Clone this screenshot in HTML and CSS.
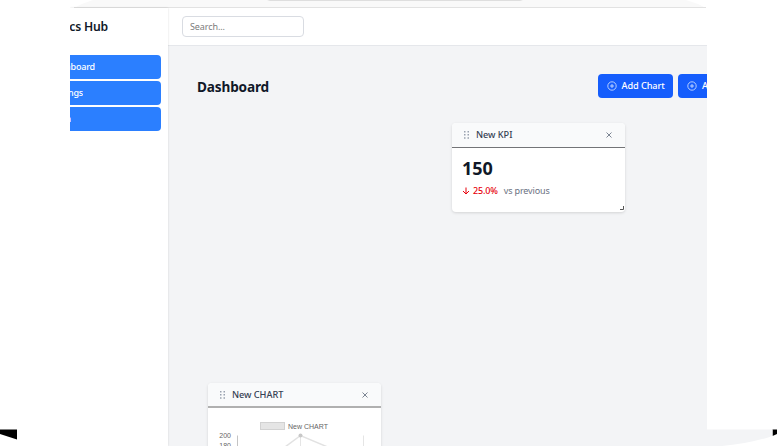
FILE: index.html
```html
<!DOCTYPE html>
<html lang="en">
<head>
<meta charset="utf-8">
<title>Analytics Hub</title>
<link rel="stylesheet" href="styles.css">
</head>
<body>
<svg class="backdrop" width="777" height="446" viewBox="0 0 777 446" aria-hidden="true">
  <path d="M0 429.5H17V439.5L0 434Z" fill="#000"/>
  <path d="M772.5 429.5H777V434L772.5 436Z" fill="#000"/>
  <path d="M706 429.5H772.5V436Q748 444 722 446H706Z" fill="#f3f4f6"/>
</svg>
<div class="window">
  <svg class="chrome" width="637" height="8" viewBox="0 0 637 8">
    <path d="M4 8Q13 3 23 0H616Q627 3 636 8Z" fill="#f9f9f9"/>
    <path d="M197 0H453L450 1H200Z" fill="#dedede"/>
    <path d="M4 7.5H636" stroke="#e2e2e2"/>
  </svg>
  <div class="app">
    <aside class="sidebar">
      <div class="brand"><span>Analytics Hub</span></div>
      <nav class="menu">
        <a class="item"><span class="dash">Dashboard</span></a>
        <a class="item"><span class="sett">Settings</span></a>
        <a class="item"><span class="auth">Login</span></a>
      </nav>
    </aside>
    <div class="content">
      <header class="topbar"><input class="search" type="text" placeholder="Search..."></header>
      <main class="main">
        <div class="heading">
          <h1>Dashboard</h1>
          <div class="actions">
            <button><svg width="10" height="10" viewBox="0 0 10 10"><circle cx="5" cy="5" r="4.2"/><path d="M5 3V7M3 5H7"/></svg><span>Add Chart</span></button>
            <button><svg width="10" height="10" viewBox="0 0 10 10"><circle cx="5" cy="5" r="4.2"/><path d="M5 3V7M3 5H7"/></svg><span>Add KPI</span></button>
          </div>
        </div>
        <div class="board">
          <section class="card kpi">
            <div class="card-head">
              <svg class="grip" width="5" height="8" viewBox="0 0 5 8"><path d="M0 0h1.5v1.5H0zM3.5 0H5v1.5H3.5zM0 3.1h1.5v1.5H0zM3.5 3.1H5v1.5H3.5zM0 6.2h1.5v1.5H0zM3.5 6.2H5v1.5H3.5z"/></svg>
              <h2>New KPI</h2>
              <svg class="close" width="6" height="6" viewBox="0 0 6 6"><path d="M.5.5l5 5M5.5.5l-5 5"/></svg>
            </div>
            <div class="kpi-body">
              <div class="value">150</div>
              <div class="trend">
                <svg width="8" height="8" viewBox="0 0 8 8"><path d="M4 .5V7M1 4L4 7L7 4"/></svg>
                <span class="change">25.0%</span><span class="note">vs previous</span>
              </div>
            </div>
            <svg class="resize" width="4" height="4" viewBox="0 0 4 4"><path d="M3.5 0V3.5H0"/></svg>
          </section>
          <section class="card chart">
            <div class="card-head">
              <svg class="grip" width="5" height="8" viewBox="0 0 5 8"><path d="M0 0h1.5v1.5H0zM3.5 0H5v1.5H3.5zM0 3.1h1.5v1.5H0zM3.5 3.1H5v1.5H3.5zM0 6.2h1.5v1.5H0zM3.5 6.2H5v1.5H3.5z"/></svg>
              <h2>New CHART</h2>
              <svg class="close" width="6" height="6" viewBox="0 0 6 6"><path d="M.5.5l5 5M5.5.5l-5 5"/></svg>
            </div>
            <svg class="plot" width="173" height="60" viewBox="0 0 173 60">
              <rect x="52.5" y="15.5" width="24" height="7" fill="#e5e5e5" stroke="#d2d2d2"/>
              <text x="80" y="21.5" textLength="40" lengthAdjust="spacingAndGlyphs">New CHART</text>
              <text x="23" y="31" text-anchor="end">200</text>
              <text x="23" y="41" text-anchor="end">180</text>
              <path d="M29.5 28.5V60" stroke="#c4c4c4"/>
              <path d="M92.5 28.5V60M155.5 28.5V60" stroke="#e5e5e5"/>
              <path d="M50 60L92.5 28.5L155 55" fill="none" stroke="#e2e2e2" stroke-width="1.5"/>
              <circle cx="92.5" cy="28.5" r="2" fill="#c8c8c8"/>
            </svg>
          </section>
        </div>
      </main>
    </div>
  </div>
</div>
</body>
</html>
```
FILE: styles.css
```css
* { box-sizing: border-box; }
body {
  margin: 0;
  height: 446px;
  overflow: hidden;
  background: #fff;
  font-family: "Noto Sans", sans-serif;
  color: #101828;
}
.backdrop { position: absolute; left: 0; top: 0; z-index: -1; }
.window { width: 637px; height: 446px; margin-left: 70px; overflow: hidden; }
.chrome { display: block; }
.app { display: flex; height: 438px; }
.sidebar { width: 98px; flex: none; background: #fff; overflow: hidden; box-shadow: 0 0 2px #0002; z-index: 1; }
.brand { height: 47px; width: 38px; padding-top: 10px; display: flex; justify-content: flex-end; overflow: hidden; font-size: 12.2px; line-height: 18px; font-weight: 600; letter-spacing: -0.2px; white-space: nowrap; }
.brand span { flex: none; }
.menu { display: flex; flex-direction: column; gap: 2px; }
.item { display: flex; align-items: center; width: 91px; height: 24px; padding-bottom: 2px; background: #2b7fff; border-radius: 0 4px 4px 0; color: #fff; font-size: 9px; font-weight: 500; letter-spacing: -0.2px; }
.item span { display: flex; justify-content: flex-end; overflow: hidden; white-space: nowrap; }
.item .dash { width: 25px; }
.item .sett { width: 13px; }
.item .auth { width: 1px; }
.content { flex: 1; min-width: 0; }
.topbar { height: 38px; padding: 8px 14px; background: #fff; border-bottom: 1px solid #e5e7eb; box-shadow: 0 1px 1px #0001; }
.search { display: block; width: 122px; height: 21px; padding: 0 7px; border: 1px solid #d9dce2; border-radius: 4px; font: 9px "Noto Sans", sans-serif; letter-spacing: -0.1px; background: #fff; }
.search::placeholder { color: #7c7c7c; }
.main { height: 400px; background: #f3f4f6; padding: 27px 0 0 29px; overflow: hidden; }
.heading { display: flex; height: 50px; }
h1 { margin: 3px 0 0; width: 400.5px; flex: none; font-size: 13.6px; line-height: 22px; font-weight: 700; letter-spacing: -0.15px; }
.actions { display: flex; gap: 5px; align-items: flex-start; padding-top: 1px; }
button { display: flex; align-items: center; gap: 5px; flex: none; width: 75.5px; height: 24px; padding: 0 0 1px 9px; border: 0; border-radius: 4px; background: #155dfc; color: #fff; font: 500 9.2px "Noto Sans", sans-serif; letter-spacing: -0.1px; white-space: nowrap; }
button svg { fill: none; stroke: #dce8ff; stroke-width: .8; flex: none; }
.board { display: grid; grid-template-columns: 11px 173px 71px 173px; grid-template-rows: 89px 171px 70px; }
.card { display: flex; flex-direction: column; background: #fff; border-radius: 4px; box-shadow: 0 1px 3px #0002; position: relative; }
.kpi { grid-column: 4; grid-row: 1; }
.chart { grid-column: 2; grid-row: 3; height: 90px; }
.card-head { display: flex; align-items: center; height: 25px; flex: none; padding: 0 13px 0 12px; border-bottom: 1px solid #737477; background: #f9fafb; border-radius: 4px 4px 0 0; }
.chart .card-head { border-bottom: 2px solid #b0b0b0; }
.grip { fill: #99a1af; }
h2 { margin: 0 auto 0 7px; font-size: 9.2px; line-height: 14px; font-weight: 500; letter-spacing: -0.05px; color: #364153; }
.close { fill: none; stroke: #7c8593; stroke-width: 1; }
.kpi-body { padding: 8px 10px; }
.value { font-size: 18px; line-height: 24px; font-weight: 700; letter-spacing: -0.1px; }
.trend { display: flex; align-items: center; margin-top: 4px; font-size: 9px; line-height: 14px; letter-spacing: -0.15px; }
.trend svg { fill: none; stroke: #e7000b; stroke-width: 1; }
.change { margin: 0 6px 0 3px; color: #e7000b; font-weight: 500; }
.note { color: #6a7282; }
.resize { position: absolute; right: 1px; bottom: 2px; fill: none; stroke: #555; }
.plot { display: block; margin-top: -1px; font: 7px "Liberation Sans", sans-serif; fill: #666; }
```
